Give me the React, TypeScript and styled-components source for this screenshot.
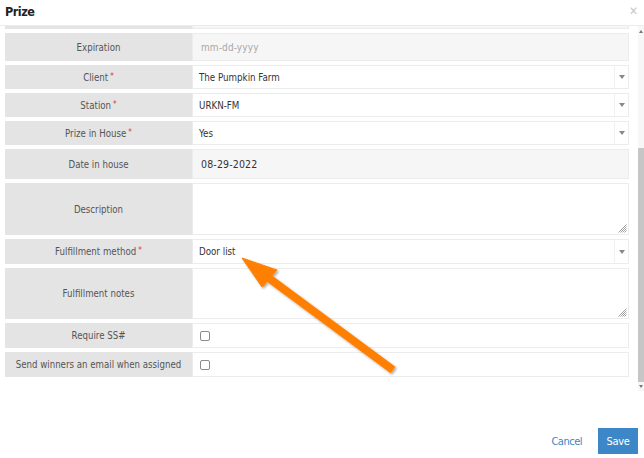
import React, { useLayoutEffect, useRef } from "react";
import styled, { createGlobalStyle } from "styled-components";

const Global = createGlobalStyle`
  html, body { margin: 0; padding: 0; background: #fff; }
  body { font-family: "DejaVu Sans Condensed", "DejaVu Sans", sans-serif; font-stretch: condensed; color: #333; }
  * { box-sizing: border-box; }
`;

const Modal = styled.div`
  position: relative;
  width: 644px;
  height: 458px;
  display: flex;
  flex-direction: column;
  background: #fff;
  overflow: hidden;
`;

const Header = styled.div`
  height: 26px;
  flex: none;
  display: flex;
  align-items: center;
  justify-content: space-between;
  padding: 0 6px 3px 5px;
  border-bottom: 1px solid #ececec;
`;

const Title = styled.h1`
  margin: 0;
  font-size: 12.5px;
  font-weight: 700;
  letter-spacing: -0.5px;
  color: #222;
`;

const Close = styled.span`
  font-family: "DejaVu Sans", sans-serif;
  font-size: 12px;
  color: #c8c8c8;
  line-height: 1;
`;

const Body = styled.div`
  height: 365px;
  flex: none;
  display: flex;
`;

const Scroller = styled.div`
  flex: 1;
  overflow-y: scroll;
  scrollbar-width: none;
  padding: 0 9px 14px 5px;
  display: flex;
  flex-direction: column;
  gap: 4px;
  &::-webkit-scrollbar { display: none; }
`;

const ScrollBar = styled.div`
  width: 6px;
  flex: none;
  display: flex;
  flex-direction: column;
  background: #f7f7f7;
  padding: 1px 0;
`;

const ScrollArrow = styled.div<{ down?: boolean }>`
  height: 8px;
  flex: none;
  display: flex;
  align-items: center;
  justify-content: center;
  &::after {
    content: "";
    border-left: 2px solid transparent;
    border-right: 2px solid transparent;
    ${(p) => (p.down ? "border-top: 3px solid #777;" : "border-bottom: 3px solid #777;")}
  }
`;

const ScrollTrack = styled.div`
  flex: 1;
  display: flex;
  flex-direction: column;
  justify-content: flex-end;
`;

const ScrollThumb = styled.div`
  height: 234px;
  background: #c6c6c6;
`;

const Row = styled.div<{ h: number }>`
  flex: none;
  height: ${(p) => p.h}px;
  display: grid;
  grid-template-columns: 187px 1fr;
`;

const Label = styled.div`
  background: #e4e4e4;
  color: #555;
  font-size: 9.6px;
  display: flex;
  align-items: center;
  justify-content: center;
  text-align: center;
  white-space: nowrap;
`;

const Req = styled.span`
  color: #e03030;
  font-size: 8px;
  margin-left: 2px;
  position: relative;
  top: -1px;
`;

const TextInput = styled.input<{ big?: boolean }>`
  width: 100%;
  height: 100%;
  border: 1px solid #ececec;
  background: #f6f6f6;
  padding: 0 8px;
  font-family: inherit;
  font-stretch: condensed;
  font-size: ${(p) => (p.big ? "10.5px" : "10px")};
  color: #333;
  letter-spacing: ${(p) => (p.big ? "0.15px" : "0.1px")};
  outline: none;
  &::placeholder { color: #a8a8a8; }
`;

const Select = styled.div`
  height: 100%;
  border: 1px solid #ececec;
  background: #fff;
  display: grid;
  grid-template-columns: 1fr 14px;
  font-size: 9.7px;
  color: #333;
`;

const SelectValue = styled.div`
  display: flex;
  align-items: center;
  padding-left: 6px;
`;

const Caret = styled.div`
  border-left: 1px solid #f0f0f0;
  display: flex;
  align-items: center;
  justify-content: center;
  &::after {
    content: "";
    border-left: 3px solid transparent;
    border-right: 3px solid transparent;
    border-top: 4px solid #888;
  }
`;

const Area = styled.textarea`
  width: 100%;
  height: 100%;
  border: 1px solid #ececec;
  background: #fff;
  resize: none;
  outline: none;
  font-family: inherit;
`;

const AreaWrap = styled.div`
  position: relative;
`;

const Grip = styled.svg`
  position: absolute;
  right: 2px;
  bottom: 2px;
`;

const CheckCell = styled.div`
  border: 1px solid #ececec;
  background: #fff;
  display: flex;
  align-items: center;
  padding-left: 7px;
`;

const Check = styled.input`
  appearance: none;
  margin: 0;
  width: 10px;
  height: 10px;
  border: 1px solid #8a8a8a;
  border-radius: 2px;
  background: #fff;
`;

const Footer = styled.div`
  flex: 1;
  display: flex;
  align-items: flex-end;
  justify-content: flex-end;
  gap: 16px;
  padding: 0 6px 4px 0;
`;

const LinkButton = styled.button`
  border: none;
  background: none;
  color: #3b87c8;
  font-family: inherit;
  font-stretch: condensed;
  font-size: 11px;
  letter-spacing: -0.5px;
  padding: 0;
  height: 26px;
`;

const PrimaryButton = styled.button`
  border: none;
  background: #3d87c9;
  color: #fff;
  font-family: inherit;
  font-stretch: condensed;
  font-size: 11px;
  letter-spacing: -0.3px;
  width: 40px;
  height: 26px;
  padding: 0;
`;

const Overlay = styled.svg`
  position: absolute;
  left: 0;
  top: 0;
  pointer-events: none;
`;

const ResizeGrip = () => (
  <Grip width="9" height="9" viewBox="0 0 9 9">
    <path d="M8.5 0.5 L0.5 8.5 M8.5 2.5 L2.5 8.5 M8.5 4.5 L4.5 8.5 M8.5 6.5 L6.5 8.5" stroke="#8a8a8a" strokeWidth="0.8" />
  </Grip>
);

type Field =
  | { kind: "text"; label: string; h: number; req?: boolean; placeholder?: string; value?: string; big?: boolean }
  | { kind: "select"; label: string; h: number; req?: boolean; value: string }
  | { kind: "area"; label: string; h: number; req?: boolean }
  | { kind: "check"; label: string; h: number; req?: boolean };

const fields: Field[] = [
  { kind: "text", label: "Name", h: 24, req: true, value: "Pumpkin Patch Passes" },
  { kind: "text", label: "Value", h: 24, value: "$40.00" },
  { kind: "text", label: "Quantity", h: 24, value: "4" },
  { kind: "select", label: "Category", h: 24, value: "Tickets" },
  { kind: "text", label: "Start date", h: 28, placeholder: "mm-dd-yyyy" },
  { kind: "text", label: "Available", h: 28, placeholder: "mm-dd-yyyy" },
  { kind: "text", label: "Expiration", h: 28, placeholder: "mm-dd-yyyy" },
  { kind: "select", label: "Client", h: 24, req: true, value: "The Pumpkin Farm" },
  { kind: "select", label: "Station", h: 24, req: true, value: "URKN-FM" },
  { kind: "select", label: "Prize in House", h: 24, req: true, value: "Yes" },
  { kind: "text", label: "Date in house", h: 30, value: "08-29-2022", big: true },
  { kind: "area", label: "Description", h: 52 },
  { kind: "select", label: "Fulfillment method", h: 25, req: true, value: "Door list" },
  { kind: "area", label: "Fulfillment notes", h: 51 },
  { kind: "check", label: "Require SS#", h: 25 },
  { kind: "check", label: "Send winners an email when assigned", h: 25 },
];

const Control = ({ f }: { f: Field }) => {
  switch (f.kind) {
    case "text":
      return (
        <TextInput
          big={f.big}
          readOnly
          placeholder={f.placeholder}
          defaultValue={f.value}
        />
      );
    case "select":
      return (
        <Select>
          <SelectValue>{f.value}</SelectValue>
          <Caret />
        </Select>
      );
    case "area":
      return (
        <AreaWrap>
          <Area />
          <ResizeGrip />
        </AreaWrap>
      );
    case "check":
      return (
        <CheckCell>
          <Check type="checkbox" />
        </CheckCell>
      );
  }
};

export default function App() {
  const bodyRef = useRef<HTMLDivElement>(null);
  useLayoutEffect(() => {
    const el = bodyRef.current;
    if (el) el.scrollTop = el.scrollHeight;
  }, []);

  return (
    <>
      <Global />
      <Modal>
        <Header>
          <Title>Prize</Title>
          <Close>✕</Close>
        </Header>
        <Body>
          <Scroller ref={bodyRef}>
            {fields.map((f) => (
              <Row key={f.label} h={f.h}>
                <Label>
                  {f.label}
                  {f.req && <Req>*</Req>}
                </Label>
                <Control f={f} />
              </Row>
            ))}
          </Scroller>
          <ScrollBar>
            <ScrollArrow />
            <ScrollTrack>
              <ScrollThumb />
            </ScrollTrack>
            <ScrollArrow down />
          </ScrollBar>
        </Body>
        <Footer>
          <LinkButton>Cancel</LinkButton>
          <PrimaryButton>Save</PrimaryButton>
        </Footer>
        <Overlay width="644" height="458" viewBox="0 0 644 458">
          <defs>
            <filter id="sh" x="-20%" y="-20%" width="140%" height="140%">
              <feDropShadow dx="1.5" dy="1.5" stdDeviation="1.2" floodColor="#000" floodOpacity="0.35" />
            </filter>
          </defs>
          <g filter="url(#sh)" fill="#ff8000" stroke="#ff8000" strokeLinejoin="round">
            <line x1="393" y1="370" x2="266" y2="276" strokeWidth="8" strokeLinecap="butt" />
            <polygon points="242,258 277,270 262,287" strokeWidth="1" />
          </g>
        </Overlay>
      </Modal>
    </>
  );
}
